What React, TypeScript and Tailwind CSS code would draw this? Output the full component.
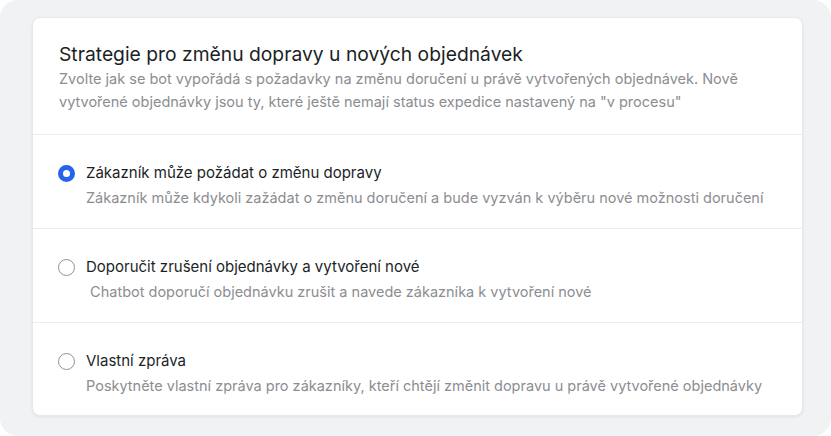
import { useState } from 'react'

const options = [
  {
    id: 'change',
    label: 'Zákazník může požádat o změnu dopravy',
    desc: 'Zákazník může kdykoli zažádat o změnu doručení a bude vyzván k výběru nové možnosti doručení',
  },
  {
    id: 'cancel',
    label: 'Doporučit zrušení objednávky a vytvoření nové',
    desc: ' Chatbot doporučí objednávku zrušit a navede zákazníka k vytvoření nové',
  },
  {
    id: 'custom',
    label: 'Vlastní zpráva',
    desc: 'Poskytněte vlastní zpráva pro zákazníky, kteří chtějí změnit dopravu u právě vytvořené objednávky',
  },
]

export default function App() {
  const [selected, setSelected] = useState('change')

  return (
    <div className="w-[831px] h-[436px] bg-white font-['Inter',sans-serif]">
      <div className="h-full w-full rounded-[18px] bg-[#f1f2f4] pl-[32px] pr-[28px] pt-[17px]">
        <div className="rounded-lg bg-white border border-[#e8e9eb] shadow-[0_1px_3px_rgba(0,0,0,0.07)]">
          {/* Header */}
          <div className="px-[26px] pt-[23px] pb-[21px] border-b border-[#ececee]">
            <h2 className="text-[19.3px] leading-[26px] text-[#1c1f26]">
              Strategie pro změnu dopravy u nových objednávek
            </h2>
            <p className="text-[14.5px] leading-[23px] text-[#8b8d91]">
              Zvolte jak se bot vypořádá s požadavky na změnu doručení u právě vytvořených objednávek. Nově
              vytvořené objednávky jsou ty, které ještě nemají status expedice nastavený na "v procesu"
            </p>
          </div>

          {/* Options */}
          {options.map((o, i) => (
            <label
              key={o.id}
              className={`flex gap-[11px] pl-[25px] pr-[26px] pt-[26px] ${
                i < options.length - 1 ? 'pb-[17px] border-b border-[#ececee]' : 'pb-[16px]'
              } cursor-pointer`}
            >
              <input
                type="radio"
                name="strategy"
                checked={selected === o.id}
                onChange={() => setSelected(o.id)}
                className="sr-only"
              />
              <span
                className={`mt-[4px] h-[17px] w-[17px] shrink-0 rounded-full ${
                  selected === o.id
                    ? 'border-[5px] border-[#2563eb] bg-white'
                    : 'border-[1.5px] border-[#8f9195] bg-white'
                }`}
              />
              <span className="flex flex-col">
                <span className="text-[15px] leading-[24px] text-[#1c1f26]">{o.label}</span>
                <span className="text-[14.5px] leading-[26px] text-[#8b8d91] whitespace-pre">{o.desc}</span>
              </span>
            </label>
          ))}
        </div>
      </div>
    </div>
  )
}
